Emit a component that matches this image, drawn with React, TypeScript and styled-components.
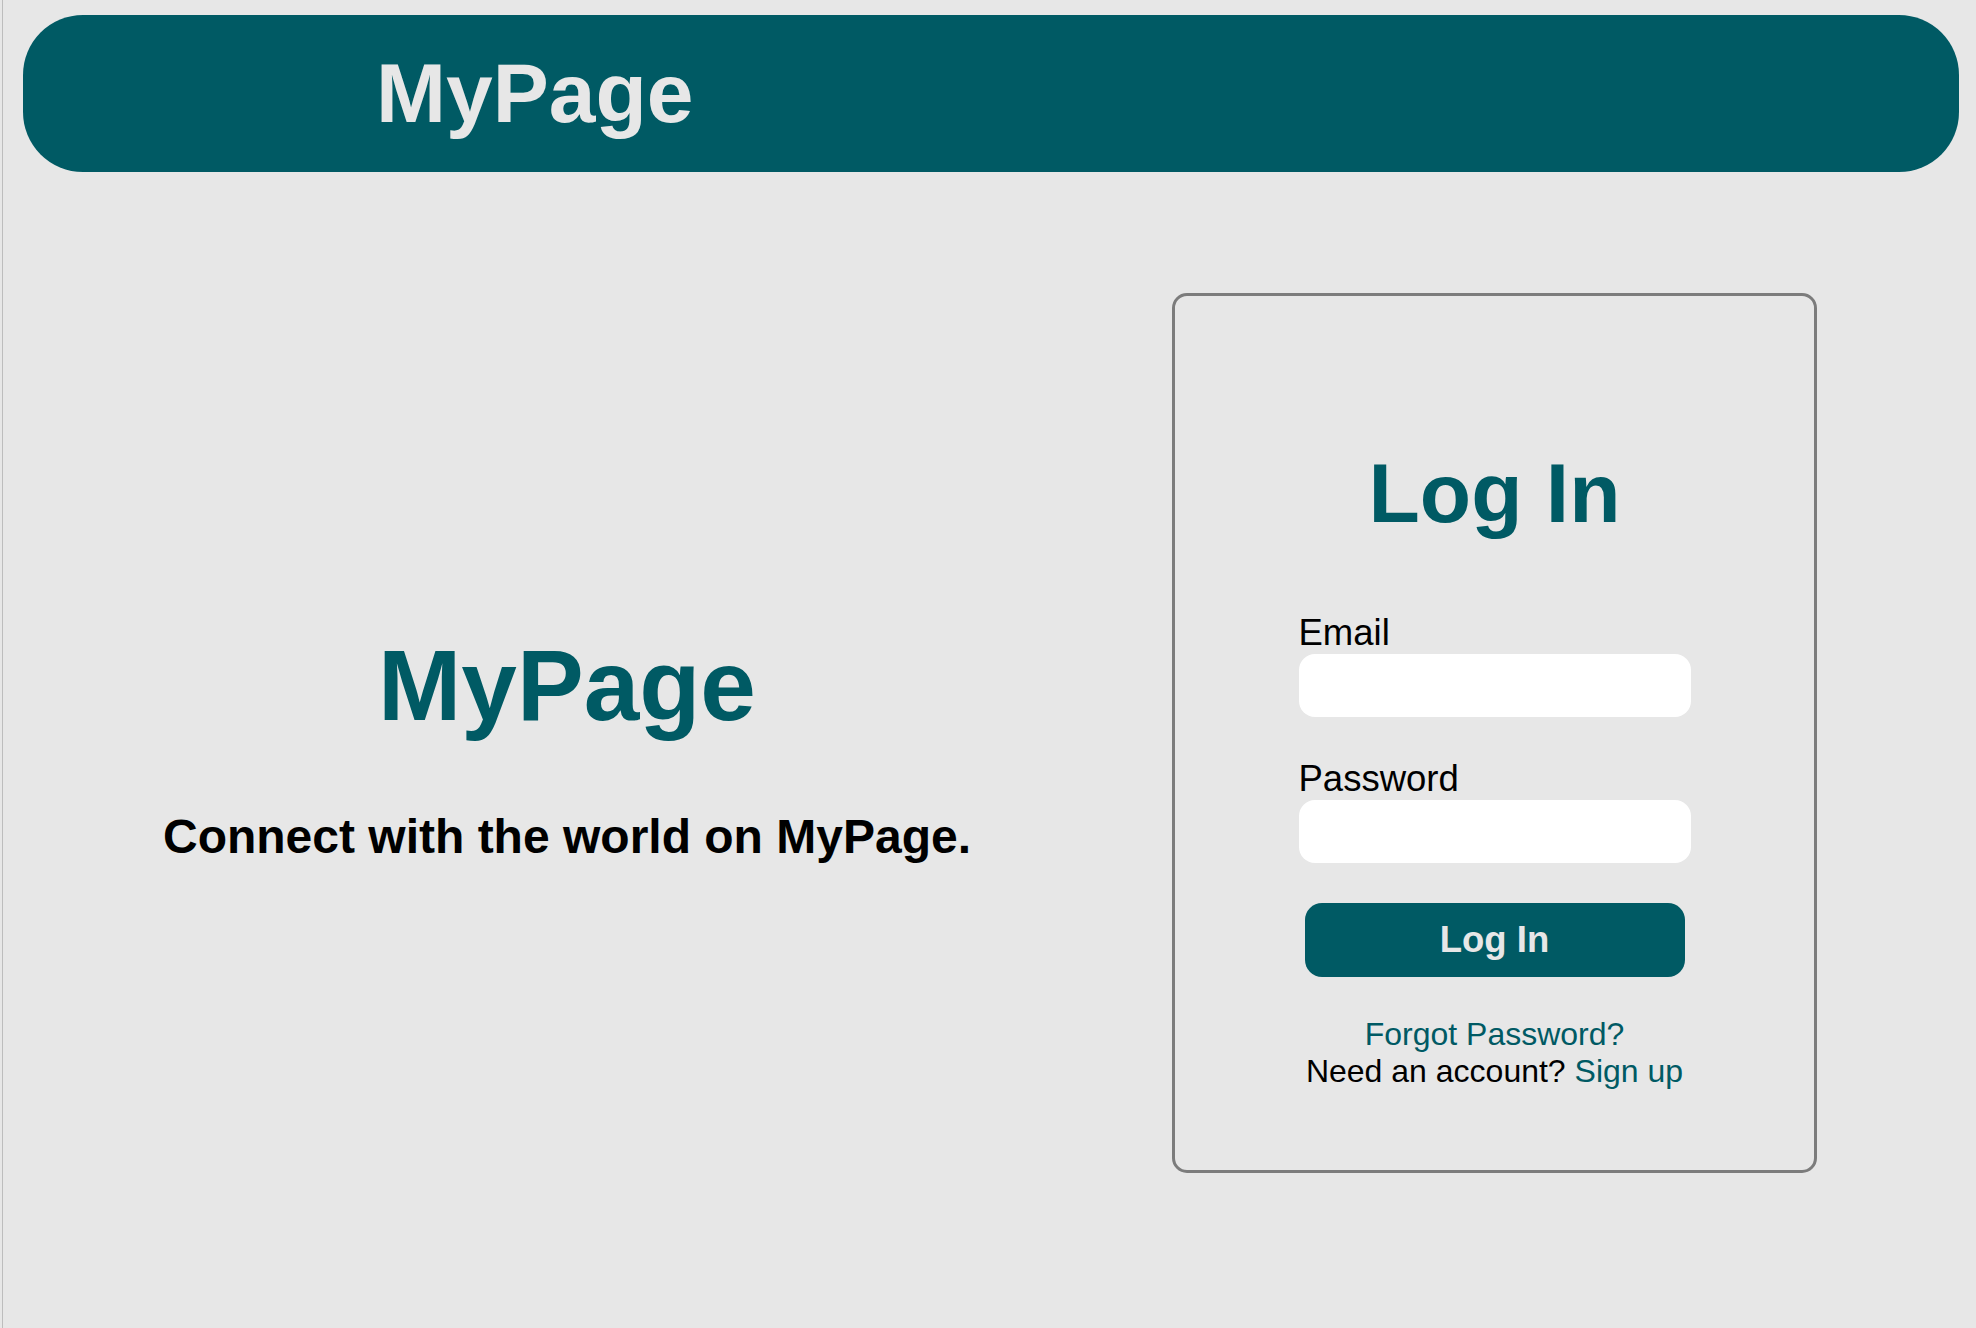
import React from "react";
import styled, { createGlobalStyle } from "styled-components";

const TEAL = "#005a64";
const BG = "#e7e7e7";

const GlobalStyle = createGlobalStyle`
  html, body {
    margin: 0;
    padding: 0;
    background: ${BG};
  }
  body {
    font-family: "Liberation Sans", Arial, Helvetica, sans-serif;
  }
  * { box-sizing: border-box; }
`;

const Page = styled.div`
  min-height: 100vh;
  margin-left: 2px;
  border-left: 1px solid #bdbdbd;
  display: flex;
  flex-direction: column;
`;

const Header = styled.header`
  margin: 15px 17px 0 20px;
  height: 157px;
  border-radius: 60px;
  background: ${TEAL};
  display: flex;
  align-items: center;
  padding-left: 353px;
`;

const HeaderTitle = styled.h1`
  margin: 0;
  font-size: 84px;
  font-weight: 700;
  line-height: normal;
  color: ${BG};
`;

const Main = styled.main`
  display: flex;
  align-items: flex-start;
  margin-top: 121px;
`;

const Intro = styled.section`
  width: 1128px;
  padding-top: 335px;
  display: flex;
  flex-direction: column;
  align-items: center;
`;

const BigTitle = styled.h2`
  margin: 0;
  font-size: 100px;
  font-weight: 700;
  line-height: normal;
  color: ${TEAL};
`;

const Tagline = styled.p`
  margin: 66px 0 0;
  font-size: 48px;
  font-weight: 700;
  line-height: normal;
  color: #000;
`;

const Card = styled.section`
  margin-left: 41px;
  width: 645px;
  height: 880px;
  border: 3px solid #7c7c7c;
  border-radius: 15px;
  padding-top: 149px;
  display: flex;
  flex-direction: column;
  align-items: center;
`;

const CardTitle = styled.h2`
  margin: 0;
  font-size: 84px;
  font-weight: 700;
  line-height: normal;
  color: ${TEAL};
`;

const Form = styled.form`
  margin-top: 70px;
  width: 392px;
  display: flex;
  flex-direction: column;
  align-items: center;
`;

const Field = styled.div<{ $gap?: number }>`
  width: 100%;
  margin-bottom: ${(p) => p.$gap ?? 0}px;
`;

const Label = styled.label`
  display: block;
  font-size: 36.5px;
  line-height: normal;
  color: #000;
`;

const Input = styled.input`
  display: block;
  width: 392px;
  height: 63px;
  border: none;
  border-radius: 16px;
  background: #fff;
  padding: 0 16px;
  font-family: inherit;
  font-size: 24px;
  outline: none;
`;

const SubmitButton = styled.button`
  margin-top: 40px;
  width: 380px;
  height: 74px;
  border: none;
  border-radius: 17px;
  background: ${TEAL};
  color: ${BG};
  font-family: inherit;
  font-size: 36.5px;
  font-weight: 700;
  cursor: pointer;
`;

const Links = styled.div`
  margin-top: 39px;
  text-align: center;
  font-size: 32px;
  line-height: normal;
  color: #000;
`;

const Link = styled.a<{ $block?: boolean }>`
  color: ${TEAL};
  text-decoration: none;
  display: ${(p) => (p.$block ? "block" : "inline")};
`;

export default function App() {
  return (
    <>
      <GlobalStyle />
      <Page>
        <Header>
          <HeaderTitle>MyPage</HeaderTitle>
        </Header>
        <Main>
          <Intro>
            <BigTitle>MyPage</BigTitle>
            <Tagline>Connect with the world on MyPage.</Tagline>
          </Intro>
          <Card>
            <CardTitle>Log In</CardTitle>
            <Form onSubmit={(e) => e.preventDefault()}>
              <Field $gap={40.5}>
                <Label htmlFor="email">Email</Label>
                <Input id="email" type="email" />
              </Field>
              <Field>
                <Label htmlFor="password">Password</Label>
                <Input id="password" type="password" />
              </Field>
              <SubmitButton type="submit">Log In</SubmitButton>
            </Form>
            <Links>
              <Link href="#" $block>
                Forgot Password?
              </Link>
              Need an account? <Link href="#">Sign up</Link>
            </Links>
          </Card>
        </Main>
      </Page>
    </>
  );
}
